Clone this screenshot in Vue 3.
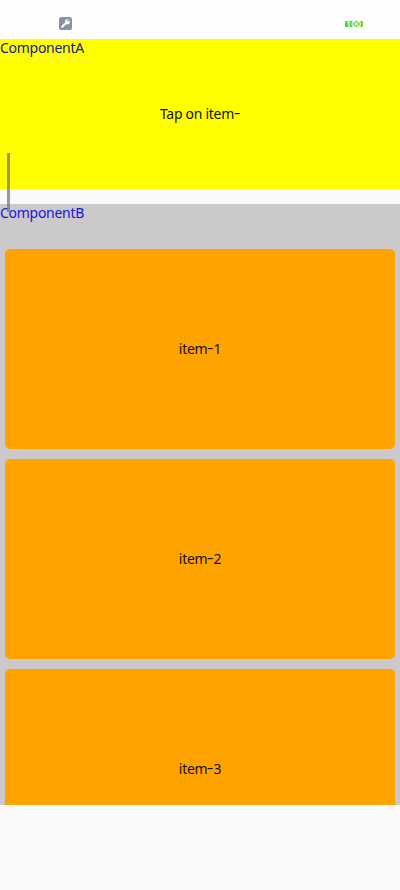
<script setup>
const items = [1, 2, 3]
</script>

<template>
  <div class="screen">
    <header class="status">
      <svg class="tool" width="13" height="13" viewBox="0 0 13 13">
        <rect width="13" height="13" rx="2.6" fill="#8991a3" />
        <path d="M3.1 9.9 7 6" stroke="#fff" stroke-width="2" stroke-linecap="round" />
        <path d="M9.8 2.5 8.2 4.1 9 4.9 10.7 3.3A2.7 2.7 0 0 1 6.5 6.6 2.7 2.7 0 0 1 9.8 2.5Z" fill="#fff" />
      </svg>
      <span class="battery">100</span>
    </header>

    <section class="panel-a">
      <div class="name">ComponentA</div>
      <div class="message">Tap on item<span class="dash">-</span></div>
      <div class="scrollbar"></div>
    </section>

    <section class="panel-b">
      <div class="name">ComponentB</div>
      <div class="list">
        <div v-for="n in items" :key="n" class="item">item<span class="dash">-</span>{{ n }}</div>
      </div>
    </section>
  </div>
</template>

<style>
body {
  background: #faf9fc;
}
</style>

<style scoped>
.screen {
  height: 890px;
  overflow: hidden;
  box-sizing: border-box;
  background: #faf9fc;
  font-family: "Noto Sans", sans-serif;
  font-size: 14px;
  line-height: 17px;
  letter-spacing: -0.28px;
  color: #161000;
}
.status {
  height: 39px;
  padding: 17px 37px 0 59px;
  box-sizing: border-box;
  display: flex;
  justify-content: space-between;
  align-items: flex-start;
  background: #fffeff;
}
.battery {
  width: 18px;
  height: 6px;
  margin-top: 4px;
  border-radius: 1px;
  background: #64cf32;
  color: #fff;
  font-size: 8px;
  font-weight: 600;
  line-height: 6px;
  letter-spacing: 0.6px;
  text-align: center;
}
.panel-a {
  position: relative;
  height: 150px;
  margin-bottom: 15px;
  display: flex;
  flex-direction: column;
  background: #ffff00;
}
.name {
  height: 19px;
  color: #1a14d8;
}
.panel-a .name {
  color: #20208c;
}
.message {
  flex: 1;
  padding-bottom: 20px;
  display: flex;
  align-items: center;
  justify-content: center;
  white-space: pre;
}
.dash {
  display: inline-block;
  width: 6px;
  text-align: center;
  transform: translateY(-1px) scaleX(1.5);
}
.scrollbar {
  position: absolute;
  left: 7px;
  top: 114px;
  width: 3px;
  height: 59px;
  background: rgba(120, 120, 120, 0.75);
}
.panel-b {
  height: 601px;
  overflow: hidden;
  background: #cbc9cc;
}
.list {
  padding: 26px 5px 0;
  display: flex;
  flex-direction: column;
  gap: 10px;
}
.item {
  height: 200px;
  padding-bottom: 2px;
  box-sizing: border-box;
  display: flex;
  align-items: center;
  justify-content: center;
  border-radius: 5px;
  background: #ffa300;
}
</style>
